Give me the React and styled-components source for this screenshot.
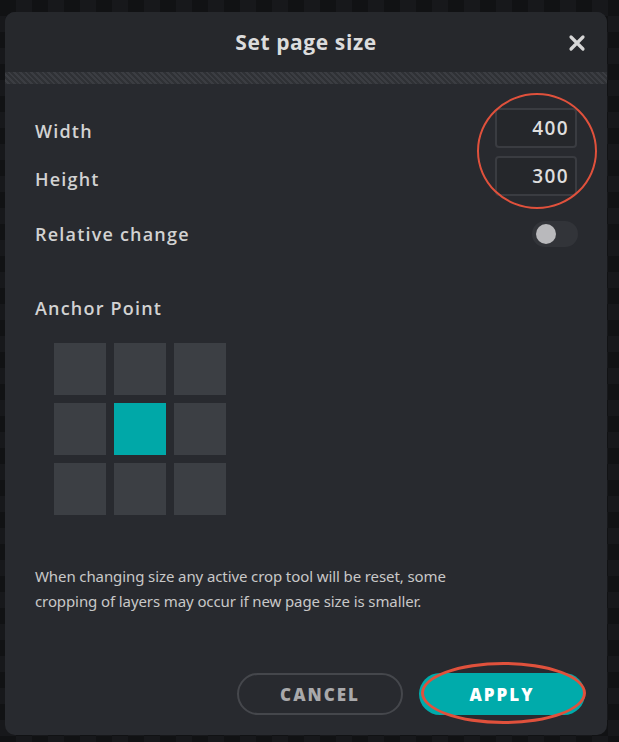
import React from "react";
import styled, { createGlobalStyle } from "styled-components";

const GlobalStyle = createGlobalStyle`
  html, body {
    margin: 0;
    padding: 0;
  }
  body {
    width: 619px;
    height: 742px;
    overflow: hidden;
    background-color: #111214;
    background-image:
      linear-gradient(45deg, #17181b 25%, transparent 25%, transparent 75%, #17181b 75%),
      linear-gradient(45deg, #17181b 25%, transparent 25%, transparent 75%, #17181b 75%);
    background-size: 32px 32px;
    background-position: 0 0, 16px 16px;
    font-family: "Open Sans", "Noto Sans", sans-serif;
  }
`;

const Page = styled.div`
  padding: 12px 12px 7px 5px;
`;

const Dialog = styled.div`
  position: relative;
  width: 602px;
  height: 723px;
  background: #282a2f;
  border-radius: 10px;
  display: flex;
  flex-direction: column;
  overflow: hidden;
`;

const Header = styled.div`
  height: 60px;
  display: flex;
  align-items: center;
  justify-content: center;
  position: relative;
  background: #26282c;
`;

const Title = styled.h2`
  margin: 0;
  font-family: "Open Sans", sans-serif;
  font-size: 21px;
  font-weight: 700;
  color: #dcdcdc;
  letter-spacing: 0.6px;
`;

const CloseButton = styled.button`
  position: absolute;
  right: 19px;
  top: 20px;
  width: 22px;
  height: 22px;
  padding: 0;
  border: none;
  background: none;
  display: flex;
  align-items: center;
  justify-content: center;
  cursor: pointer;
`;

const Hatch = styled.div`
  height: 12px;
  background: repeating-linear-gradient(
    45deg,
    #2f3135 0px,
    #2f3135 2px,
    #3b3d42 2px,
    #3b3d42 4px
  );
`;

const Body = styled.div`
  flex: 1;
  padding: 24px 30px 20px 30px;
  display: flex;
  flex-direction: column;
`;

const FieldRow = styled.div`
  display: flex;
  align-items: center;
  justify-content: space-between;
  height: ${(p) => p.$h || 40}px;
  margin-bottom: ${(p) => p.$mb || 0}px;
`;

const Label = styled.span`
  font-family: "Open Sans", sans-serif;
  font-size: 18px;
  font-weight: 600;
  color: #d2d2d2;
  letter-spacing: 1.2px;
`;

const InputLabel = styled(Label)`
  padding-top: 5px;
`;

const NumberInput = styled.input`
  box-sizing: border-box;
  width: 82px;
  height: 40px;
  background: #25272b;
  border: 2px solid #3a3c41;
  border-radius: 4px;
  color: #dedede;
  font-family: "Open Sans", sans-serif;
  font-size: 19px;
  font-weight: 600;
  letter-spacing: 1.4px;
  text-align: right;
  padding: 0 6px;
  outline: none;
`;

const Toggle = styled.div`
  width: 46px;
  height: 26px;
  border-radius: 13px;
  background: #323439;
  display: flex;
  align-items: center;
  padding-left: 4px;
  box-sizing: border-box;
  margin-right: -1px;
`;

const Knob = styled.div`
  width: 20px;
  height: 20px;
  border-radius: 50%;
  background: #b9b9bc;
`;

const SectionTitle = styled(Label)`
  display: block;
  margin-top: 49px;
`;

const AnchorGrid = styled.div`
  display: grid;
  grid-template-columns: repeat(3, 52px);
  grid-auto-rows: 52px;
  gap: 8px;
  margin: 23px 0 0 19px;
`;

const Cell = styled.div`
  background: ${(p) => (p.$active ? "#00a8a8" : "#3c3f44")};
`;

const Note = styled.p`
  margin: 49px 0 0 0;
  max-width: 430px;
  font-family: "Noto Sans", sans-serif;
  font-size: 15px;
  line-height: 25px;
  color: #c8c8c8;
  letter-spacing: -0.1px;
`;

const Footer = styled.div`
  margin-top: auto;
  display: flex;
  justify-content: flex-end;
  gap: 16px;
  margin-right: -8px;
`;

const Button = styled.button`
  width: 166px;
  height: 42px;
  border-radius: 21px;
  font-family: "Open Sans", sans-serif;
  font-size: 17px;
  font-weight: 800;
  letter-spacing: 2px;
  cursor: pointer;
  border: ${(p) => (p.$primary ? "none" : "2px solid #45474c")};
  background: ${(p) => (p.$primary ? "#00abab" : "transparent")};
  color: ${(p) => (p.$primary ? "#ffffff" : "#a9a9ab")};
`;

const Annotation = styled.div`
  position: absolute;
  border: 2.5px solid #e0513c;
  border-radius: 50%;
  pointer-events: none;
  box-sizing: border-box;
`;

const CircleMark = styled(Annotation)`
  left: 472px;
  top: 81px;
  width: 120px;
  height: 116px;
`;

const ApplyMark = styled(Annotation)`
  left: 416px;
  top: 650px;
  width: 165px;
  height: 62px;
  border-width: 3px;
`;

const cells = [0, 1, 2, 3, 4, 5, 6, 7, 8];

export default function App() {
  return (
    <>
      <GlobalStyle />
      <Page>
        <Dialog>
          <Header>
            <Title>Set page size</Title>
            <CloseButton aria-label="Close">
              <svg width="18" height="18" viewBox="0 0 18 18">
                <path
                  d="M3 3 L15 15 M15 3 L3 15"
                  stroke="#d6d6d6"
                  strokeWidth="3.2"
                  strokeLinecap="round"
                />
              </svg>
            </CloseButton>
          </Header>
          <Hatch />
          <Body>
            <FieldRow $mb={8}>
              <InputLabel>Width</InputLabel>
              <NumberInput defaultValue="400" />
            </FieldRow>
            <FieldRow $mb={25}>
              <InputLabel>Height</InputLabel>
              <NumberInput defaultValue="300" />
            </FieldRow>
            <FieldRow $h={26}>
              <Label>Relative change</Label>
              <Toggle>
                <Knob />
              </Toggle>
            </FieldRow>
            <SectionTitle>Anchor Point</SectionTitle>
            <AnchorGrid>
              {cells.map((i) => (
                <Cell key={i} $active={i === 4} />
              ))}
            </AnchorGrid>
            <Note>
              When changing size any active crop tool will be reset, some
              cropping of layers may occur if new page size is smaller.
            </Note>
            <Footer>
              <Button>CANCEL</Button>
              <Button $primary>APPLY</Button>
            </Footer>
          </Body>
          <CircleMark />
          <ApplyMark />
        </Dialog>
      </Page>
    </>
  );
}
